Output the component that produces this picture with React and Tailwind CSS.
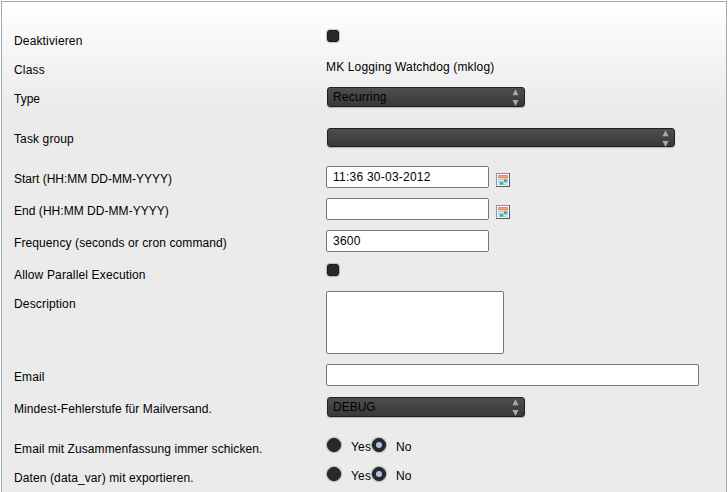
import React from "react";

function Row({ label, height, tracking = "", offset = "", children }) {
  return (
    <div className={`flex shrink-0 items-start ${height}`}>
      <div className={`w-[312px] shrink-0 pt-[5px] leading-4 whitespace-nowrap ${tracking}`}>
        {label}
      </div>
      <div className={`flex items-start ${offset}`}>{children}</div>
    </div>
  );
}

function Checkbox() {
  return (
    <div className="ml-px h-3 w-3 rounded-[3px] border border-[#1a1a1a] bg-[#282828] shadow-[0_0_1px_1px_rgba(0,0,0,0.22)]" />
  );
}

function Radio({ checked }) {
  return (
    <div className="flex size-[14px] items-center justify-center rounded-full border border-[#1c1c1c] bg-[#292929] shadow-[0_0_1px_1px_rgba(0,0,0,0.25)]">
      {checked && <div className="size-[6px] rounded-full bg-[#a9c4ec]" />}
    </div>
  );
}

function RadioPair() {
  return (
    <div className="flex pl-px">
      <Radio />
      <span className="w-[21px] pt-px pl-[10px] leading-4 tracking-[0.2px]">Yes</span>
      <div className="ml-[10px]">
        <Radio checked />
      </div>
      <span className="pt-px pl-[10px] leading-4 tracking-[0.2px]">No</span>
    </div>
  );
}

function Select({ size, tracking = "", children }) {
  return (
    <div
      className={`ml-px flex justify-between rounded-[3px] border border-[#1f2020] bg-linear-to-b from-[#4d4f4f] to-[#373838] pr-[5px] pl-[5px] text-black shadow-[0_1px_1px_rgba(0,0,0,0.25)] ${size}`}
    >
      <span className={`leading-[18px] ${tracking}`}>{children}</span>
      <svg className="mt-px h-[17px] w-[7px]" viewBox="0 0 7 17">
        <path d="M3.5 0.3 L6.5 6.2 H0.5 Z" fill="#a9aaaa" />
        <path d="M0.5 11 H6.5 L3.5 17 Z" fill="#a9aaaa" />
      </svg>
    </div>
  );
}

function Field({ size, children }) {
  return (
    <div
      className={`rounded-[2px] border border-[#777777] bg-white pl-[6px] leading-5 tracking-[0.24px] ${size}`}
    >
      {children}
    </div>
  );
}

function CalendarIcon() {
  return (
    <svg className="mt-[7px] ml-[7px] size-[14px]" viewBox="0 0 14 14" shapeRendering="crispEdges">
      <rect width="14" height="14" fill="#8493ae" />
      <path d="M13 0h1v14H0v-1h13z" fill="#4d5a78" />
      <rect x="1" y="1" width="12" height="12" fill="#f8fbff" />
      <rect x="2" y="2" width="10" height="3" fill="#f58a45" />
      <rect x="3" y="3" width="8" height="1" fill="#ffa565" />
      <rect x="2" y="5" width="10" height="7" fill="#b3cdf2" />
      <path
        d="M2 7h1v1H2zM4 7h1v1H4zM6 7h1v1H6zM2 10h1v1H2zM8 10h1v1H8zM10 10h1v1h-1zM3 5h1v1H3zM5 5h1v1H5zM7 5h1v1H7zM9 5h1v1H9z"
        fill="#eef5ff"
      />
      <path d="M12 9v4H8z" fill="#d5e4fb" />
      <rect x="4" y="9" width="3" height="3" fill="#6fb26f" />
      <rect x="5" y="10" width="1" height="1" fill="#3f9245" />
      <rect x="8" y="6" width="3" height="3" fill="#6fb26f" />
      <rect x="9" y="7" width="1" height="1" fill="#3f8f45" />
    </svg>
  );
}

export default function App() {
  return (
    <div className="h-[492px] w-[728px] overflow-hidden bg-white pt-px pl-px font-['Liberation_Sans',Arial,sans-serif] text-[12px] text-black">
      <div className="flex h-[500px] w-[726px] flex-col border border-[#a5a7a8] bg-[#ebebeb] bg-[linear-gradient(to_bottom,#ffffff_0px,#ebebeb_105px)] pt-[26px] pl-3">
        <Row label="Deaktivieren" height="h-[29px]" tracking="tracking-[0.15px]" offset="pt-[2px]">
          <Checkbox />
        </Row>
        <Row label="Class" height="h-[29px]" tracking="tracking-[0.2px]" offset="pt-[2px]">
          <span className="leading-4 tracking-[0.15px]">MK Logging Watchdog (mklog)</span>
        </Row>
        <Row label="Type" height="h-10" offset="pt-px">
          <Select size="h-5 w-[198px]" tracking="tracking-[0.18px]">
            Recurring
          </Select>
        </Row>
        <Row label="Task group" height="h-10" tracking="tracking-[0.12px]" offset="pt-[2px]">
          <Select size="h-[19px] w-[348px]" />
        </Row>
        <Row label="Start (HH:MM DD-MM-YYYY)" height="h-8">
          <Field size="h-[22px] w-[163px]">11:36 30-03-2012</Field>
          <CalendarIcon />
        </Row>
        <Row label="End (HH:MM DD-MM-YYYY)" height="h-8" tracking="tracking-[0.04px]">
          <Field size="h-[22px] w-[163px]" />
          <CalendarIcon />
        </Row>
        <Row
          label="Frequency (seconds or cron command)"
          height="h-8"
          tracking="tracking-[0.1px]"
        >
          <Field size="h-[22px] w-[163px]">3600</Field>
        </Row>
        <Row
          label="Allow Parallel Execution"
          height="h-[29px]"
          tracking="tracking-[0.15px]"
          offset="pt-[2px]"
        >
          <Checkbox />
        </Row>
        <Row label="Description" height="h-[73px]" tracking="tracking-[0.16px]">
          <Field size="h-[63px] w-[178px]" />
        </Row>
        <Row label="Email" height="h-8" tracking="tracking-[0.12px]">
          <Field size="h-[22px] w-[373px]" />
        </Row>
        <Row
          label="Mindest-Fehlerstufe für Mailversand."
          height="h-10"
          tracking="tracking-[0.09px]"
          offset="pt-px"
        >
          <Select size="h-5 w-[198px]">DEBUG</Select>
        </Row>
        <Row
          label="Email mit Zusammenfassung immer schicken."
          height="h-[29px]"
          tracking="tracking-[0.09px]"
          offset="pt-[2px]"
        >
          <RadioPair />
        </Row>
        <Row
          label="Daten (data_var) mit exportieren."
          height="h-[29px]"
          tracking="tracking-[0.11px]"
          offset="pt-[2px]"
        >
          <RadioPair />
        </Row>
      </div>
    </div>
  );
}
